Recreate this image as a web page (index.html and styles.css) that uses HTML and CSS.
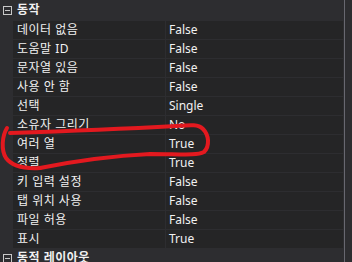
FILE: index.html
```html
<!DOCTYPE html>
<html lang="ko">

<head>
    <meta charset="UTF-8">
    <meta name="viewport" content="width=device-width, initial-scale=1.0">
    <title>속성</title>
    <link rel="stylesheet" href="styles.css">
</head>

<body>
    <div class="panel">
        <div class="grid">
            <div class="category">
                <svg class="toggle" width="9" height="9" viewBox="0 0 9 9">
                    <rect x="0.5" y="0.5" width="8" height="8" fill="none" stroke="#c8c8c8" />
                    <line x1="2" y1="4.5" x2="7" y2="4.5" stroke="#c8c8c8" />
                </svg>
                <span class="cat-name">동작</span>
            </div>
            <div class="row"><div class="name">데이터 없음</div><div class="value">False</div></div>
            <div class="row"><div class="name">도움말 ID</div><div class="value">False</div></div>
            <div class="row"><div class="name">문자열 있음</div><div class="value">False</div></div>
            <div class="row"><div class="name">사용 안 함</div><div class="value">False</div></div>
            <div class="row"><div class="name">선택</div><div class="value">Single</div></div>
            <div class="row"><div class="name">소유자 그리기</div><div class="value">No</div></div>
            <div class="row"><div class="name">여러 열</div><div class="value">True</div></div>
            <div class="row"><div class="name">정렬</div><div class="value">True</div></div>
            <div class="row"><div class="name">키 입력 설정</div><div class="value">False</div></div>
            <div class="row"><div class="name">탭 위치 사용</div><div class="value">False</div></div>
            <div class="row"><div class="name">파일 허용</div><div class="value">False</div></div>
            <div class="row"><div class="name">표시</div><div class="value">True</div></div>
            <div class="category">
                <svg class="toggle" width="9" height="9" viewBox="0 0 9 9">
                    <rect x="0.5" y="0.5" width="8" height="8" fill="none" stroke="#c8c8c8" />
                    <line x1="2" y1="4.5" x2="7" y2="4.5" stroke="#c8c8c8" />
                </svg>
                <span class="cat-name">동적 레이아웃</span>
            </div>
        </div>
        <div class="scroll-line"></div>

        <!-- hand-drawn red mark around 여러 열 -->
        <svg class="mark" width="352" height="262" viewBox="0 0 352 262">
            <path d="M10 133 C 40 132, 120 129, 176 126 C 190 125, 198 124, 203 129 C 209 135, 210 146, 204 152 C 196 156, 180 154, 150 154 C 110 156, 70 162, 40 168"
                fill="none" stroke="#e3191f" stroke-width="4" stroke-linecap="round" />
            <path d="M7 128 C 2 136, 1 150, 6 158 C 12 166, 24 169, 40 168"
                fill="none" stroke="#e3191f" stroke-width="4" stroke-linecap="round" />
        </svg>
    </div>
</body>

</html>
```

FILE: styles.css
```css
body {
    margin: 0;
    padding: 0;
    background-color: #2d2d30;
    font-family: "Noto Sans", "Noto Sans CJK KR", sans-serif;
    font-size: 12px;
    color: #f1f1f1;
}

.panel {
    position: relative;
    display: flex;
    width: 352px;
    height: 262px;
    overflow: hidden;
    background-color: #2d2d30;
}

.grid {
    width: 343px;
    flex-shrink: 0;
}

.category {
    display: flex;
    align-items: center;
    height: 20px;
}

.toggle {
    margin-left: 3px;
    margin-top: 1px;
}

.cat-name {
    margin-left: 5px;
    font-weight: bold;
    letter-spacing: 0.5px;
    line-height: 20px;
}

.row {
    display: flex;
    box-sizing: border-box;
    height: 19px;
    margin-left: 13px;
    border-top: 1px solid #2d2d30;
    background-color: #252526;
    line-height: 18px;
}

.name {
    box-sizing: border-box;
    width: 153px;
    padding-left: 4px;
    border-right: 1px solid #2d2d30;
    letter-spacing: 0.5px;
    white-space: nowrap;
}

.value {
    padding-left: 3px;
    white-space: nowrap;
}

.scroll-line {
    width: 1px;
    margin-left: 1px;
    background-color: #686870;
}

.mark {
    position: absolute;
    left: 0;
    top: 0;
    pointer-events: none;
}
```
